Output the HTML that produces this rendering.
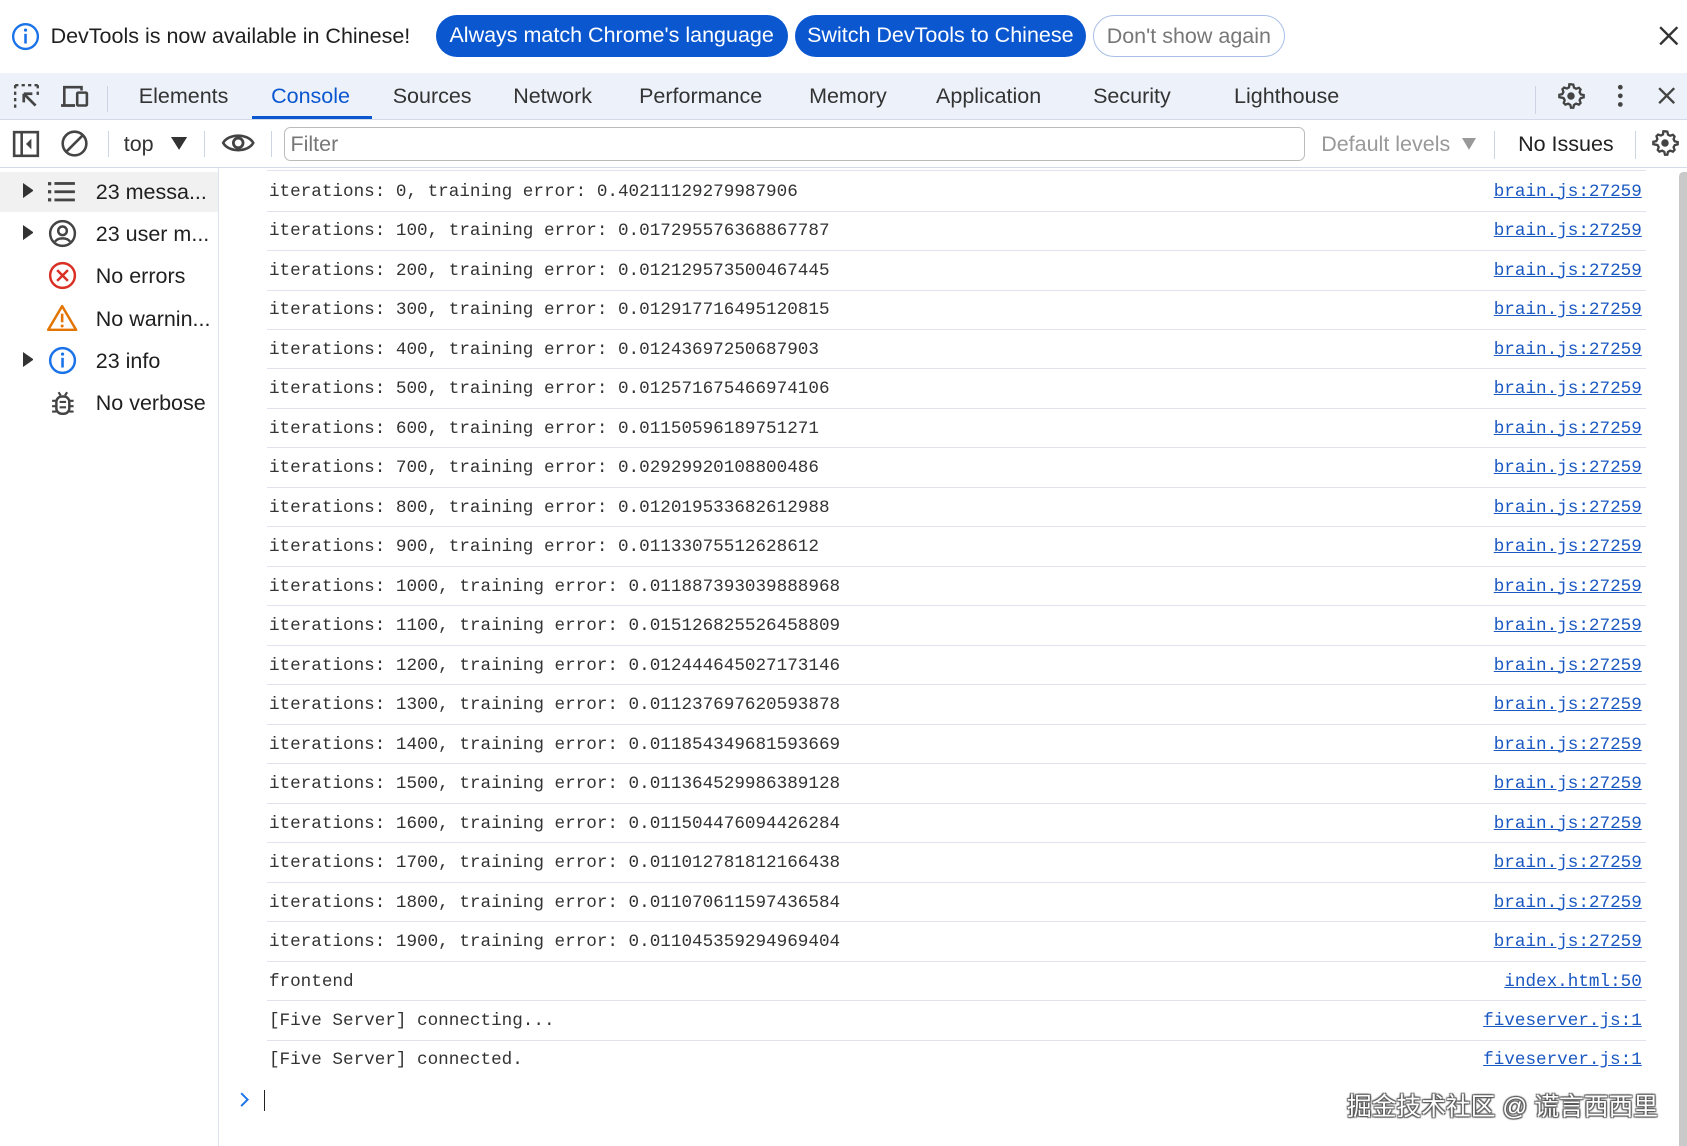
<!DOCTYPE html>
<html><head><meta charset="utf-8"><style>
html,body{margin:0;padding:0;background:#fff;overflow:hidden;width:1687px;height:1146px}
#w{zoom:1.07589;width:1568px;height:1065px;position:relative;font-family:"Liberation Sans",sans-serif;color:#1f1f1f}
.a{position:absolute;white-space:nowrap}
.ui{font-size:20px}
.pill{position:absolute;top:14px;height:39px;border-radius:20px;font-size:20px;line-height:39px;text-align:center;box-sizing:border-box}
.mono{font-family:"Liberation Mono","Noto Serif CJK SC",monospace;font-size:16.4px;color:#333}
.row{position:absolute;left:248px;width:1282px;height:36.7px;border-bottom:1px solid #e0e3ee}
.row .t{position:absolute;left:2px;top:10px}
.row .l{position:absolute;right:4px;top:10px;color:#1a58c2;text-decoration:underline}
</style></head><body><div id="w">
<svg class="a" style="left:10px;top:20px" width="27" height="27" viewBox="0 0 27 27"><circle cx="13.5" cy="13.5" r="11.5" fill="none" stroke="#1a73e8" stroke-width="2.2"/><rect x="12.3" y="11" width="2.4" height="9" fill="#1a73e8"/><circle cx="13.5" cy="7.5" r="1.5" fill="#1a73e8"/></svg>
<div class="a ui" style="left:47px;top:22px">DevTools is now available in Chinese!</div>
<div class="pill" style="left:405px;width:327px;background:#0b57d0;color:#fff">Always match Chrome's language</div>
<div class="pill" style="left:739px;width:270px;background:#0b57d0;color:#fff">Switch DevTools to Chinese</div>
<div class="pill" style="left:1016px;width:178px;border:1px solid #a8c0e8;color:#777">Don't show again</div>
<svg class="a" style="left:1541px;top:23px" width="20" height="20"><path d="M2 2L18 18M18 2L2 18" stroke="#333" stroke-width="2.2"/></svg>
<div class="a" style="left:0;top:68px;width:1568px;height:43px;background:#edf2fa;border-bottom:1px solid #d3dbe8"></div>
<svg class="a" style="left:12px;top:77px" width="26" height="26"><path d="M2 2h3M8 2h3M14 2h3M20 2h3M2 2v3M2 8v3M2 14v3M2 20v3M23 2v3M23 8v3" stroke="#444" stroke-width="2.2" fill="none"/><path d="M10 10l11 11M10 10v8M10 10h8" stroke="#444" stroke-width="2.5" fill="none"/></svg>
<svg class="a" style="left:56px;top:78px" width="28" height="24"><path d="M4 19V3h16v3" stroke="#444" stroke-width="2.4" fill="none"/><path d="M1 20h13" stroke="#444" stroke-width="2.6"/><rect x="16" y="8" width="9" height="12" rx="1" stroke="#444" stroke-width="2.4" fill="none"/></svg>
<div class="a" style="left:99px;top:80px;width:1px;height:24px;background:#cdd5e3"></div>
<div class="a ui" style="left:129px;top:78px;color:#333">Elements</div>
<div class="a ui" style="left:252px;top:78px;color:#0b57d0">Console</div>
<div class="a" style="left:234px;top:108px;width:112px;height:3px;background:#0b57d0"></div>
<div class="a ui" style="left:365px;top:78px;color:#333">Sources</div>
<div class="a ui" style="left:477px;top:78px;color:#333">Network</div>
<div class="a ui" style="left:594px;top:78px;color:#333">Performance</div>
<div class="a ui" style="left:752px;top:78px;color:#333">Memory</div>
<div class="a ui" style="left:870px;top:78px;color:#333">Application</div>
<div class="a ui" style="left:1016px;top:78px;color:#333">Security</div>
<div class="a ui" style="left:1147px;top:78px;color:#333">Lighthouse</div>
<div class="a" style="left:1427px;top:80px;width:1px;height:26px;background:#cdd5e3"></div>
<svg class="a" style="left:1447px;top:76px" width="26" height="26" viewBox="0 0 24 24"><path d="M12 2l2 .3.6 2.5 1.8 1 2.4-.8 1.4 1.4-.8 2.4 1 1.8 2.5.6v2l-2.5.6-1 1.8.8 2.4-1.4 1.4-2.4-.8-1.8 1-.6 2.5h-2l-.6-2.5-1.8-1-2.4.8-1.4-1.4.8-2.4-1-1.8L2 13v-2l2.5-.6 1-1.8-.8-2.4 1.4-1.4 2.4.8 1.8-1L10.6 2z" fill="none" stroke="#444" stroke-width="2"/><circle cx="12" cy="12" r="3.2" fill="#444"/></svg>
<svg class="a" style="left:1502px;top:78px" width="8" height="24"><circle cx="4" cy="3" r="2.2" fill="#444"/><circle cx="4" cy="11" r="2.2" fill="#444"/><circle cx="4" cy="19" r="2.2" fill="#444"/></svg>
<svg class="a" style="left:1540px;top:80px" width="18" height="18"><path d="M2 2L16 16M16 2L2 16" stroke="#444" stroke-width="2.2"/></svg>
<div class="a" style="left:0;top:155px;width:1568px;height:1px;background:#d3dbe8"></div>
<svg class="a" style="left:11px;top:121px" width="26" height="26"><rect x="2" y="2" width="22" height="22" fill="none" stroke="#444" stroke-width="2.4"/><path d="M9 2v22" stroke="#444" stroke-width="2.4"/><path d="M18 8l-5 5 5 5z" fill="#444"/></svg>
<svg class="a" style="left:56px;top:120px" width="27" height="27"><circle cx="13.5" cy="13.5" r="11" fill="none" stroke="#444" stroke-width="2.4"/><path d="M6 21L21 6" stroke="#444" stroke-width="2.4"/></svg>
<div class="a" style="left:100px;top:122px;width:1px;height:24px;background:#cdd5e3"></div>
<div class="a ui" style="left:115px;top:123px;color:#333">top</div>
<svg class="a" style="left:159px;top:127px" width="15" height="12"><path d="M0 0h15L7.5 12z" fill="#333"/></svg>
<div class="a" style="left:190px;top:122px;width:1px;height:24px;background:#cdd5e3"></div>
<svg class="a" style="left:205px;top:121px" width="32" height="24"><path d="M2 12C7 3 25 3 30 12C25 21 7 21 2 12z" fill="none" stroke="#444" stroke-width="2.4"/><circle cx="16" cy="12" r="4.5" fill="none" stroke="#444" stroke-width="2.6"/></svg>
<div class="a" style="left:252px;top:122px;width:1px;height:24px;background:#cdd5e3"></div>
<div class="a" style="left:264px;top:118px;width:949px;height:32px;border:1px solid #bbb;border-radius:6px;box-sizing:border-box"></div>
<div class="a ui" style="left:270px;top:123px;color:#777">Filter</div>
<div class="a ui" style="left:1228px;top:123px;color:#999">Default levels</div>
<svg class="a" style="left:1359px;top:128px" width="13" height="11"><path d="M0 0h13L6.5 11z" fill="#999"/></svg>
<div class="a" style="left:1389px;top:122px;width:1px;height:26px;background:#cdd5e3"></div>
<div class="a ui" style="left:1411px;top:123px;color:#222">No Issues</div>
<div class="a" style="left:1520px;top:122px;width:1px;height:26px;background:#cdd5e3"></div>
<svg class="a" style="left:1535px;top:120px" width="26" height="26" viewBox="0 0 24 24"><path d="M12 2l2 .3.6 2.5 1.8 1 2.4-.8 1.4 1.4-.8 2.4 1 1.8 2.5.6v2l-2.5.6-1 1.8.8 2.4-1.4 1.4-2.4-.8-1.8 1-.6 2.5h-2l-.6-2.5-1.8-1-2.4.8-1.4-1.4.8-2.4-1-1.8L2 13v-2l2.5-.6 1-1.8-.8-2.4 1.4-1.4 2.4.8 1.8-1L10.6 2z" fill="none" stroke="#444" stroke-width="2"/><circle cx="12" cy="12" r="3.2" fill="#444"/></svg>
<div class="a" style="left:203px;top:156px;width:1px;height:909px;background:#dde3ef"></div>
<div class="a" style="left:0;top:160px;width:203px;height:37px;background:#f1f1f1"></div>
<svg class="a" style="left:21px;top:170px" width="10" height="14"><path d="M0 0l10 7-10 7z" fill="#333"/></svg>
<svg class="a" style="left:45px;top:168px" width="26" height="20"><g fill="#444"><rect x="0" y="1" width="3" height="3"/><rect x="0" y="8.5" width="3" height="3"/><rect x="0" y="16" width="3" height="3"/><rect x="6" y="1" width="19" height="2.6"/><rect x="6" y="8.7" width="19" height="2.6"/><rect x="6" y="16.3" width="19" height="2.6"/></g></svg>
<div class="a ui" style="left:89px;top:167px">23 messa...</div>
<svg class="a" style="left:21px;top:209px" width="10" height="14"><path d="M0 0l10 7-10 7z" fill="#333"/></svg>
<svg class="a" style="left:45px;top:204px" width="27" height="27"><circle cx="13.5" cy="13.5" r="11.5" fill="none" stroke="#444" stroke-width="2.3"/><circle cx="13.5" cy="11" r="4" fill="none" stroke="#444" stroke-width="2.3"/><path d="M6.5 21c3-4 11-4 14 0" fill="none" stroke="#444" stroke-width="2.3"/></svg>
<div class="a ui" style="left:89px;top:206px">23 user m...</div>
<svg class="a" style="left:45px;top:243px" width="27" height="27"><circle cx="13.5" cy="13.5" r="11.5" fill="none" stroke="#d93025" stroke-width="2.3"/><path d="M8.5 8.5l10 10M18.5 8.5l-10 10" stroke="#d93025" stroke-width="2.3"/></svg>
<div class="a ui" style="left:89px;top:245px">No errors</div>
<svg class="a" style="left:43px;top:283px" width="30" height="26"><path d="M15 2L28 24H2z" fill="none" stroke="#e37400" stroke-width="2.3" stroke-linejoin="round"/><path d="M15 9v8" stroke="#e37400" stroke-width="2.4"/><circle cx="15" cy="20.5" r="1.4" fill="#e37400"/></svg>
<div class="a ui" style="left:89px;top:285px">No warnin...</div>
<svg class="a" style="left:21px;top:327px" width="10" height="14"><path d="M0 0l10 7-10 7z" fill="#333"/></svg>
<svg class="a" style="left:45px;top:322px" width="27" height="27"><circle cx="13.5" cy="13.5" r="11.5" fill="none" stroke="#1a73e8" stroke-width="2.3"/><rect x="12.3" y="11" width="2.4" height="9" fill="#1a73e8"/><circle cx="13.5" cy="7.5" r="1.5" fill="#1a73e8"/></svg>
<div class="a ui" style="left:89px;top:324px">23 info</div>
<svg class="a" style="left:47px;top:362px" width="22" height="25"><path d="M7 3l2 3M15 3l-2 3" stroke="#444" stroke-width="2"/><rect x="5" y="7" width="12" height="16" rx="5" fill="none" stroke="#444" stroke-width="2.3"/><path d="M1 11h4M17 11h4M1 16h4M17 16h4M1 21h4M17 21h4M8 12h6M8 17h6" stroke="#444" stroke-width="2"/></svg>
<div class="a ui" style="left:89px;top:363px">No verbose</div>
<div class="a" style="left:248px;top:158px;width:1282px;height:1px;background:#e0e3ee"></div>
<div id="rows" class="mono"></div>
<div class="a" style="left:1561px;top:160px;width:7px;height:905px;background:#c9c9c9;border-radius:4px 0 0 0"></div>
<svg class="a" style="left:222px;top:1014px" width="10" height="16"><path d="M2 2l6 6-6 6" fill="none" stroke="#1a73e8" stroke-width="1.8"/></svg>
<div class="a" style="left:245px;top:1013px;width:1px;height:20px;background:#222"></div>
<div class="a" style="left:1252px;top:1010px;font-family:'Liberation Sans','Noto Sans CJK SC',sans-serif;font-size:23px;color:#fff;text-shadow:1px 1px 1px #555,-1px -1px 1px #555,1px -1px 1px #555,-1px 1px 1px #555">掘金技术社区 @ 谎言西西里</div>
</div>
<script>
var d=[["iterations: 0, training error: 0.40211129279987906","brain.js:27259"],
["iterations: 100, training error: 0.017295576368867787","brain.js:27259"],
["iterations: 200, training error: 0.012129573500467445","brain.js:27259"],
["iterations: 300, training error: 0.012917716495120815","brain.js:27259"],
["iterations: 400, training error: 0.01243697250687903","brain.js:27259"],
["iterations: 500, training error: 0.012571675466974106","brain.js:27259"],
["iterations: 600, training error: 0.01150596189751271","brain.js:27259"],
["iterations: 700, training error: 0.02929920108800486","brain.js:27259"],
["iterations: 800, training error: 0.012019533682612988","brain.js:27259"],
["iterations: 900, training error: 0.01133075512628612","brain.js:27259"],
["iterations: 1000, training error: 0.011887393039888968","brain.js:27259"],
["iterations: 1100, training error: 0.015126825526458809","brain.js:27259"],
["iterations: 1200, training error: 0.012444645027173146","brain.js:27259"],
["iterations: 1300, training error: 0.011237697620593878","brain.js:27259"],
["iterations: 1400, training error: 0.011854349681593669","brain.js:27259"],
["iterations: 1500, training error: 0.011364529986389128","brain.js:27259"],
["iterations: 1600, training error: 0.011504476094426284","brain.js:27259"],
["iterations: 1700, training error: 0.011012781812166438","brain.js:27259"],
["iterations: 1800, training error: 0.011070611597436584","brain.js:27259"],
["iterations: 1900, training error: 0.011045359294969404","brain.js:27259"],
["frontend","index.html:50"],
["[Five Server] connecting...","fiveserver.js:1"],
["[Five Server] connected.","fiveserver.js:1"]];
var h="";d.forEach(function(r,i){h+='<div class="row" style="top:'+(159+i*36.7)+'px'+(i==22?';border-bottom:none':'')+'"><span class="t">'+r[0]+'</span><span class="l">'+r[1]+'</span></div>';});
document.getElementById("rows").innerHTML=h;
</script>
</body></html>
